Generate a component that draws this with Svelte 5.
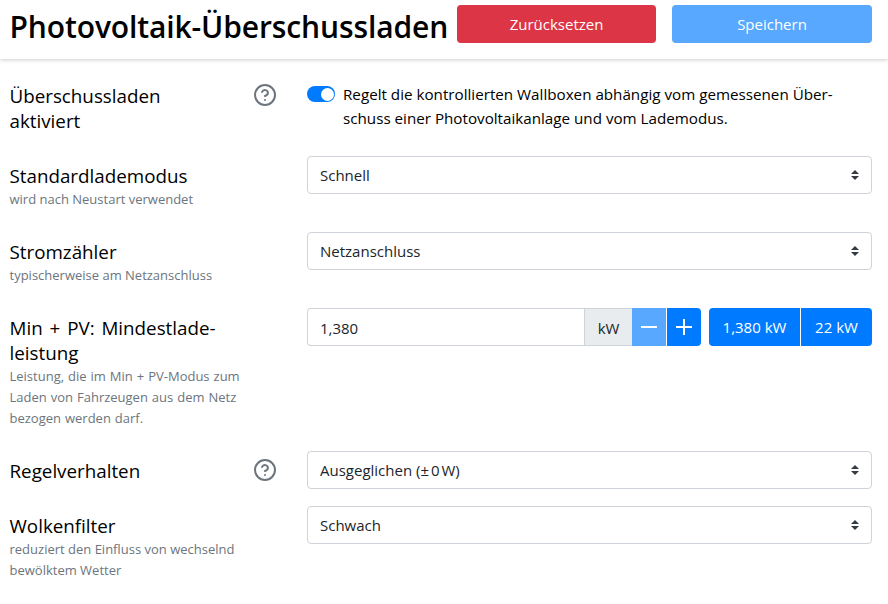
<script>
  const rows = [
    { label: 'Standardlademodus', hint: 'wird nach Neustart verwendet', value: 'Schnell', cls: 'r2' },
    { label: 'Stromzähler', hint: 'typischerweise am Netzanschluss', value: 'Netzanschluss', cls: 'r3' }
  ];
  const arrows = "url(\"data:image/svg+xml,%3csvg xmlns='http://www.w3.org/2000/svg' width='4' height='5' viewBox='0 0 4 5'%3e%3cpath fill='%23343a40' d='M2 0L0 2h4zm0 5L0 3h4z'/%3e%3c/svg%3e\")";
</script>

{#snippet help()}
  <svg class="help" viewBox="0 0 24 24" width="24" height="24" fill="none" stroke="#6c757d" stroke-width="2" stroke-linecap="round" stroke-linejoin="round">
    <circle cx="12" cy="12" r="10"></circle>
    <path d="M9.1 9a3 3 0 0 1 5.8 1c0 2-3 3-3 3"></path>
    <path d="M12 17h.01"></path>
  </svg>
{/snippet}

{#snippet pick(value)}
  <select class="select" style="background-image: {arrows}">
    <option>{value}</option>
  </select>
{/snippet}

<header>
  <h1>Photovoltaik-Überschussladen</h1>
  <div class="actions">
    <button class="btn red">Zurücksetzen</button>
    <button class="btn light">Speichern</button>
  </div>
</header>

<main>
  <section class="row first">
    <div class="label">
      <div class="name">
        <span>Überschussladen aktiviert</span>
        {@render help()}
      </div>
    </div>
    <div class="field toggle-field">
      <span class="toggle"><span class="knob"></span></span>
      <p>Regelt die kontrollierten Wallboxen abhängig vom gemessenen Über-<br>schuss einer Photovoltaikanlage und vom Lademodus.</p>
    </div>
  </section>

  {#each rows as row}
    <section class="row {row.cls}">
      <div class="label">
        <div class="name"><span>{row.label}</span></div>
        <small>{row.hint}</small>
      </div>
      <div class="field">{@render pick(row.value)}</div>
    </section>
  {/each}

  <section class="row r4">
    <div class="label">
      <div class="name"><span>Min + PV: Mindestlade-<br>leistung</span></div>
      <small>Leistung, die im Min + PV-Modus zum<br>Laden von Fahrzeugen aus dem Netz<br>bezogen werden darf.</small>
    </div>
    <div class="field power">
      <div class="group">
        <input value="1,380" />
        <span class="unit">kW</span>
        <button class="step dim" aria-label="weniger"><svg viewBox="0 0 16 16" width="16" height="16"><path d="M0 8h16" stroke="#fff" stroke-width="2"></path></svg></button>
        <button class="step" aria-label="mehr"><svg viewBox="0 0 16 16" width="16" height="16"><path d="M0 8h16M8 0v16" stroke="#fff" stroke-width="2"></path></svg></button>
      </div>
      <div class="presets">
        <button class="preset p1">1,380 kW</button>
        <button class="preset p2">22 kW</button>
      </div>
    </div>
  </section>

  <section class="row r5">
    <div class="label">
      <div class="name"><span>Regelverhalten</span>{@render help()}</div>
    </div>
    <div class="field">{@render pick('Ausgeglichen (±\u202f0\u202fW)')}</div>
  </section>

  <section class="row r6">
    <div class="label">
      <div class="name"><span>Wolkenfilter</span></div>
      <small>reduziert den Einfluss von wechselnd<br>bewölktem Wetter</small>
    </div>
    <div class="field">{@render pick('Schwach')}</div>
  </section>
</main>

<style>
  :global(body) {
    margin: 0;
    background: #fff;
    color: #212529;
    font-family: "Open Sans", "Noto Sans", sans-serif;
  }

  header {
    height: 59px;
    padding: 0 16px 0 9.5px;
    display: flex;
    justify-content: space-between;
    box-shadow: 0 1px 4px rgba(0, 0, 0, 0.2);
  }

  h1 {
    margin: 5px 0 0;
    font-size: 30px;
    line-height: 44px;
    font-weight: 600;
    color: #000;
    white-space: nowrap;
    letter-spacing: -0.12px;
  }

  .actions {
    display: flex;
    gap: 16px;
    padding-top: 5px;
  }

  .btn {
    width: 199px;
    height: 38px;
    border: 0;
    border-radius: 4px;
    color: #fff;
    font: inherit;
    font-size: 15px;
  }

  .btn.light {
    width: 200px;
    background: #59a8ff;
  }

  .red {
    background: #dc3545;
  }

  main {
    padding: 0 16px 0 9.5px;
  }

  .row {
    display: flex;
  }

  .first {
    margin-top: 24px;
    height: 73px;
  }

  .r3, .r2 {
    height: 76px;
  }

  .r4 {
    height: 143px;
  }

  .r5 {
    height: 55px;
  }

  .label {
    width: 297.5px;
    flex: none;
  }

  .name {
    display: flex;
    justify-content: space-between;
    font-size: 18.8px;
    line-height: 25px;
    padding-top: 8px;
  }

  .name span {
    max-width: 200px;
    color: #000;
  }

  .r4 .name span {
    max-width: none;
    word-spacing: 2px;
  }

  .r4 small {
    word-spacing: 0.6px;
  }

  .help {
    margin: -1px 30.5px 0 0;
  }

  .first .name {
    padding-top: 0;
    margin-top: 1px;
  }

  small {
    display: block;
    font-size: 13px;
    line-height: 21px;
    color: #6c757d;
  }

  .field {
    flex: 1;
    min-width: 0;
  }

  .toggle-field {
    display: flex;
  }

  .toggle {
    width: 28px;
    height: 16px;
    margin-top: 3px;
    flex: none;
    border-radius: 8px;
    background: #007bff;
    display: flex;
    justify-content: flex-end;
    align-items: center;
    padding-right: 1.5px;
    box-sizing: border-box;
  }

  .knob {
    width: 13px;
    height: 13px;
    border-radius: 50%;
    background: #fff;
  }

  p {
    margin: -1px 0 0 8px;
    font-size: 15.2px;
    line-height: 24px;
    color: #000;
    white-space: nowrap;
  }

  .select {
    width: 100%;
    height: 38px;
    display: block;
    appearance: none;
    padding: 0 28px 0 12px;
    border: 1px solid #ced4da;
    border-radius: 4px;
    background-color: #fff;
    background-repeat: no-repeat;
    background-position: right 12px center;
    background-size: 8px 10px;
    color: #212529;
    font: inherit;
    font-size: 15px;
  }

  .power {
    display: flex;
    gap: 8px;
  }

  .group {
    display: flex;
    width: 394px;
    height: 38px;
  }

  input {
    flex: 1;
    min-width: 0;
    box-sizing: border-box;
    border: 1px solid #ced4da;
    border-right: 0;
    border-radius: 4px 0 0 4px;
    padding: 1px 12px 0;
    color: #212529;
    font: inherit;
    font-size: 15px;
  }

  .unit {
    width: 48px;
    flex: none;
    display: flex;
    align-items: center;
    justify-content: center;
    background: #e9ecef;
    border: 1px solid #ced4da;
    border-right: 0;
    box-sizing: border-box;
    padding-top: 1px;
    font-size: 15px;
  }

  .step {
    width: 34px;
    flex: none;
    padding: 0;
    border: 0;
    background: #007bff;
    display: flex;
    align-items: center;
    justify-content: center;
  }

  .step.dim {
    background: #59a8ff;
    margin-right: 1px;
  }

  .step:last-child {
    border-radius: 0 4px 4px 0;
  }

  .presets {
    display: flex;
    gap: 1px;
    flex: 1;
  }

  .preset {
    border: 0;
    padding: 0;
    height: 38px;
    background: #007bff;
    color: #fff;
    font: inherit;
    font-size: 15px;
  }

  .p1 {
    width: 91px;
    border-radius: 4px 0 0 4px;
  }

  .p2 {
    flex: 1;
    border-radius: 0 4px 4px 0;
  }
</style>
